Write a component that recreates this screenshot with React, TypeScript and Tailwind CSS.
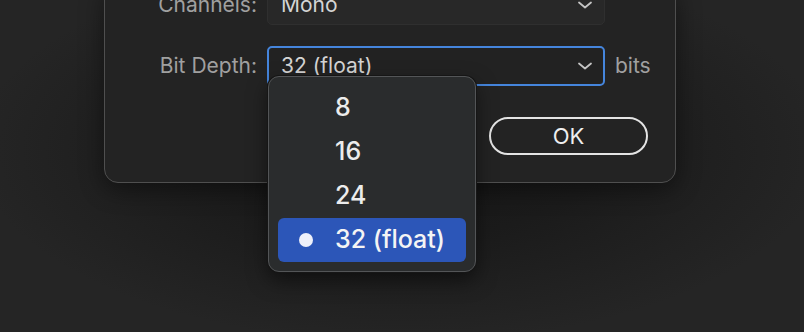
import React from "react";

const Chevron = () => (
  <svg width="16" height="10" viewBox="0 0 16 10" fill="none">
    <path d="M2 2.5 L8 7.5 L14 2.5" stroke="#c4c4c4" strokeWidth="1.8" strokeLinecap="round" strokeLinejoin="round" />
  </svg>
);

export default function App() {
  const items = ["8", "16", "24", "32 (float)"];
  return (
    <div
      className="relative h-[332px] w-[804px] overflow-hidden bg-[#252525] text-[21px]"
      style={{ fontFamily: "Inter, 'Noto Sans', sans-serif" }}
    >
      <div className="pointer-events-none absolute inset-0 bg-[radial-gradient(ellipse_at_50%_45%,#161616_0%,#1b1b1b_35%,transparent_75%)]" />
      <div className="relative ml-[104px] mt-[-16px] w-[572px] rounded-[14px] border-[1.5px] border-[#4f4f4f] bg-[#232323] pb-[27px] shadow-[0_6px_24px_rgba(0,0,0,0.45)]">
        <div className="flex h-[40px] items-center">
          <div className="w-[152px] text-right text-[#a0a0a0]">Channels:</div>
          <div className="ml-[10px] flex h-[40px] w-[338px] items-center justify-between rounded-[5px] border border-[#2f2f2f] bg-[#282828] pl-[13px] pr-[11px] text-[#d4d4d4]">
            <span>Mono</span>
            <Chevron />
          </div>
        </div>
        <div className="mt-[21px] flex h-[40px] items-center">
          <div className="w-[152px] text-right text-[#a0a0a0]">Bit Depth:</div>
          <div className="ml-[10px] flex h-[40px] w-[338px] items-center justify-between rounded-[5px] border-2 border-[#4585dc] bg-[#222222] pl-[12px] pr-[10px] text-[#d4d4d4]">
            <span>32 (float)</span>
            <Chevron />
          </div>
          <div className="ml-[10px] text-[#a0a0a0]">bits</div>
        </div>
        <div className="mt-[31px] flex justify-end pr-[27px]">
          <div className="flex h-[38px] w-[159px] items-center justify-center rounded-full border-2 border-[#e4e4e4] text-[22px] text-[#eeeeee]">
            OK
          </div>
        </div>
      </div>
      <div className="absolute left-[268px] top-[76px] flex w-[208px] flex-col rounded-[11px] border border-[#535557] bg-[#2a2c2d] p-[9px] shadow-[0_0_0_1px_#161616,0_8px_20px_rgba(0,0,0,0.5)]">
        {items.map((it, i) => {
          const sel = i === items.length - 1;
          return (
            <div
              key={it}
              className={
                "flex h-[44px] items-center rounded-[6px] pl-[21px] text-[25px] font-medium " +
                (sel ? "bg-[#2c56b8] text-[#f4f4f4]" : "text-[#ececec]")
              }
            >
              <span className="flex w-[36px] items-center">
                {sel && <span className="h-[14px] w-[14px] rounded-full bg-[#eef0fa]" />}
              </span>
              {it}
            </div>
          );
        })}
      </div>
    </div>
  );
}
